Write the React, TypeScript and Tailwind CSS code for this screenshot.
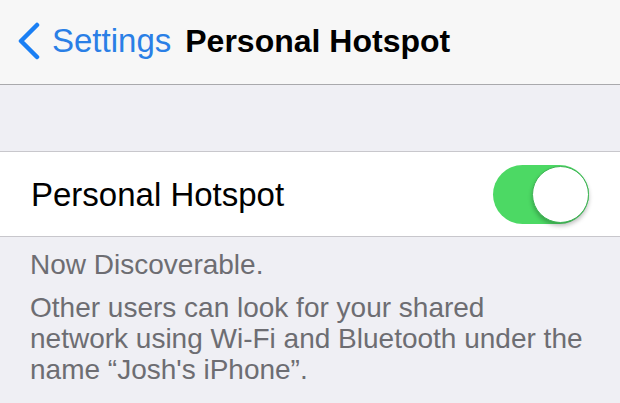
export default function App() {
  return (
    <div
      className="w-[620px] h-[403px] overflow-hidden bg-[#efeff4]"
      style={{ fontFamily: '"Liberation Sans", Arial, sans-serif' }}
    >
      {/* Nav bar */}
      <div className="h-[85px] bg-[#f7f7f7] border-b border-[#a9a9ac] flex items-center pb-[3px] pl-[16px]">
        <svg width="26" height="38" viewBox="0 0 26 38" className="shrink-0">
          <polyline
            points="21,3 5,19 21,35"
            fill="none"
            stroke="#1a7ff4"
            strokeWidth="4.5"
            strokeLinecap="round"
            strokeLinejoin="round"
          />
        </svg>
        <span className="ml-[10px] text-[33px] leading-none text-[#2a7fe6]">
          Settings
        </span>
        <span className="ml-[14px] text-[32px] leading-none font-bold text-black">
          Personal Hotspot
        </span>
      </div>

      {/* Spacer */}
      <div className="h-[67px] border-b border-[#c8c7cc]" />

      {/* Toggle row */}
      <div className="h-[85px] bg-white border-b border-[#c8c7cc] flex items-center justify-between pl-[31px] pr-[31px]">
        <span className="text-[33px] leading-none text-black">
          Personal Hotspot
        </span>
        <div className="relative w-[96px] h-[59px] rounded-full bg-[#4cd964]">
          <div className="absolute right-0 top-[1px] w-[57px] h-[57px] rounded-full bg-white border border-[#3fb455] shadow-[0_3px_4px_rgba(0,0,0,0.25)]" />
        </div>
      </div>

      {/* Footer */}
      <div className="pl-[30px] pr-[20px] pt-[12px] text-[28px] leading-[31px] text-[#6d6d72]">
        <p>Now Discoverable.</p>
        <p className="mt-[12px]">
          Other users can look for your shared
          <br />
          network using Wi-Fi and Bluetooth under the
          <br />
          name “Josh's iPhone”.
        </p>
      </div>
    </div>
  );
}
